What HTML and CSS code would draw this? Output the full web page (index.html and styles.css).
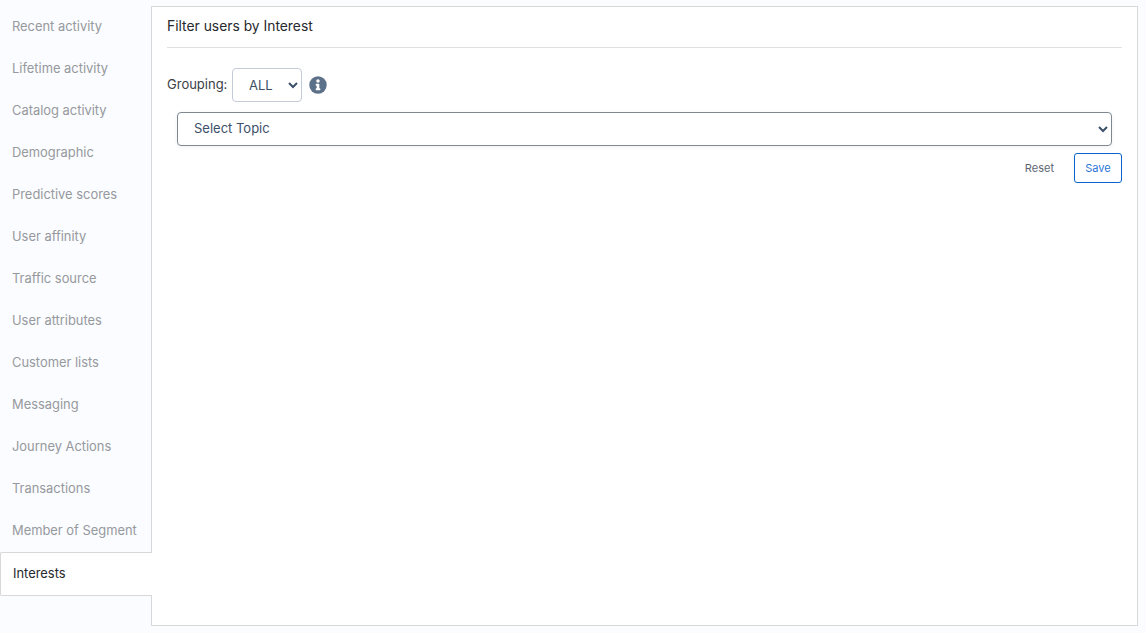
FILE: index.html
```html
<!DOCTYPE html>
<html lang="en">
<head>
<meta charset="utf-8">
<title>Filter users by Interest</title>
<link rel="stylesheet" href="styles.css">
</head>
<body>
<div class="app">
  <nav class="sidebar">
    <a class="tab">Recent activity</a>
    <a class="tab">Lifetime activity</a>
    <a class="tab">Catalog activity</a>
    <a class="tab">Demographic</a>
    <a class="tab">Predictive scores</a>
    <a class="tab">User affinity</a>
    <a class="tab">Traffic source</a>
    <a class="tab">User attributes</a>
    <a class="tab">Customer lists</a>
    <a class="tab">Messaging</a>
    <a class="tab">Journey Actions</a>
    <a class="tab">Transactions</a>
    <a class="tab">Member of Segment</a>
    <a class="tab tab-active">Interests</a>
  </nav>
  <main class="panel">
    <h2 class="panel-title">Filter users by Interest</h2>
    <div class="grouping">
      <label class="grouping-label" for="grouping">Grouping:</label>
      <select class="select select-small" id="grouping"><option>ALL</option></select>
      <svg class="info" viewBox="0 0 512 512" width="18" height="18" aria-hidden="true">
        <circle cx="256" cy="256" r="248" fill="#5b7089"/>
        <g fill="#fff" transform="translate(256 256) scale(1.18) translate(-256 -256)">
          <circle cx="256" cy="160" r="42"/>
          <path d="M312 372c0 6.600-5.400 12-12 12h-88c-6.600 0-12-5.400-12-12v-24c0-6.600 5.400-12 12-12h12v-64h-12c-6.600 0-12-5.400-12-12v-24c0-6.600 5.400-12 12-12h64c6.600 0 12 5.400 12 12v100h12c6.600 0 12 5.400 12 12v24z"/>
        </g>
      </svg>
    </div>
    <div class="topic">
      <select class="select select-topic"><option>Select Topic</option></select>
    </div>
    <div class="actions">
      <button class="btn btn-reset" type="button">Reset</button>
      <button class="btn btn-save" type="button">Save</button>
    </div>
  </main>
</div>
</body>
</html>
```
FILE: styles.css
```css
* { box-sizing: border-box; }
html, body { margin: 0; height: 100%; }
body {
  background: #fbfcff;
  font-family: "Inter", "Liberation Sans", sans-serif;
  color: #26292d;
  overflow: hidden;
}
.app {
  display: flex;
  height: 633px;
  padding: 6px 8px 7px 0;
}
.sidebar {
  display: flex;
  flex-direction: column;
  flex: 0 0 151px;
  min-width: 0;
  margin-top: -1px;
  position: relative;
  z-index: 1;
}
.tab {
  display: flex;
  align-items: center;
  height: 42px;
  padding-left: 12px;
  font-size: 12.9px;
  color: #96999d;
  white-space: nowrap;
}
.tab-active {
  width: 152px;
  height: 44px;
  margin-top: 1px;
  padding-bottom: 1px;
  background: #fff;
  color: #26292d;
  border: 1px solid #d8d8d8;
  border-right: 0;
  border-radius: 2px 0 0 2px;
}
.panel {
  flex: 1;
  background: #fff;
  border: 1px solid #d8d8d8;
  padding: 0 15px;
}
.panel-title {
  margin: 0;
  height: 41px;
  line-height: 38px;
  font-size: 13.85px;
  font-weight: 400;
  color: #26292d;
  border-bottom: 1px solid #e0e0e0;
}
.grouping {
  display: flex;
  align-items: center;
  gap: 4px;
  margin-top: 20px;
  height: 34px;
}
.grouping-label {
  width: 61px;
  padding-bottom: 2px;
  font-size: 13px;
  color: #3b4046;
  white-space: nowrap;
}
.select {
  background: #fff;
  font-family: inherit;
  font-size: 13px;
  color: #3d5068;
  border-radius: 4px;
  height: 34px;
  outline: none;
}
.select-small {
  width: 70px;
  border: 1px solid #c4cbd6;
  padding-left: 12px;
}
.info { margin-left: 3px; }
.topic {
  padding: 0 10px;
  margin-top: 10px;
}
.select-topic {
  display: block;
  width: 100%;
  border: 1px solid #7f8890;
  padding: 0 0 2px 12px;
  box-shadow: 0 1px 4px rgba(60, 80, 110, 0.08);
}
.actions {
  display: flex;
  justify-content: flex-end;
  align-items: center;
  gap: 20px;
  margin-top: 7px;
}
.btn {
  font-family: inherit;
  font-size: 11px;
  height: 30px;
  background: #fff;
  border-radius: 3px;
  cursor: pointer;
}
.btn-reset {
  border: 0;
  padding: 0;
  color: #5c6672;
}
.btn-save {
  width: 48px;
  padding: 0;
  border: 1px solid #0b63ce;
  color: #2a76d8;
}
```
